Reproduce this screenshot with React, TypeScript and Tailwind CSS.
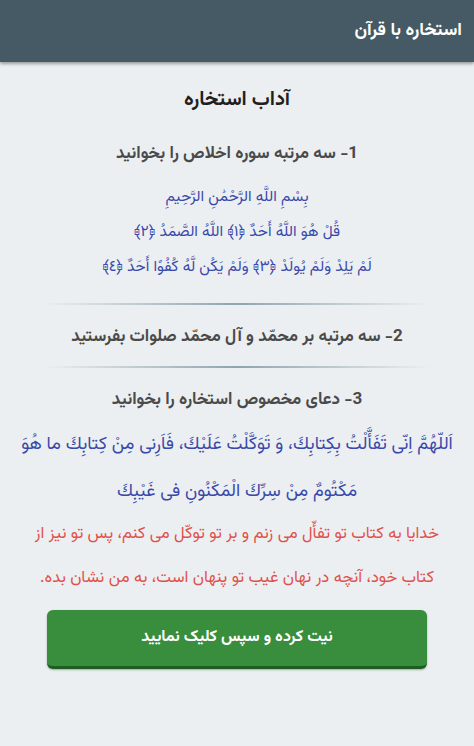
import React from 'react';

const font = { fontFamily: '"Vazirmatn", "Noto Sans Arabic", "DejaVu Sans", sans-serif' };

const Divider: React.FC = () => (
  <div className="mx-auto mt-[14px] mb-[17px] h-[2px] w-[388px] bg-gradient-to-r from-transparent via-[#90a4ae] to-transparent" />
);

const App: React.FC = () => {
  return (
    <div dir="rtl" className="min-h-[746px] w-[474px] bg-[#eceff1]" style={font}>
      <header className="flex h-[62px] items-center bg-[#455a64] px-3 shadow-[0_2px_3px_rgba(0,0,0,0.35)]">
        <h1 className="text-[18px] font-bold text-white">استخاره با قرآن</h1>
      </header>

      <main className="flex flex-col items-center px-3 pt-[23px] text-center">
        <h2 className="text-[20px] font-bold text-[#1f1f1f]">آداب استخاره</h2>

        <h3 className="mt-[27px] text-[17px] font-bold text-[#4a4a4a]">1- سه مرتبه سوره اخلاص را بخوانید</h3>

        <div className="mt-[15px] flex flex-col gap-[7px] text-[15.5px] leading-[28px] text-[#3949ab]">
          <p>بِسْمِ اللَّهِ الرَّحْمَٰنِ الرَّحِيمِ</p>
          <p>قُلْ هُوَ اللَّهُ أَحَدٌ ﴿١﴾ اللَّهُ الصَّمَدُ ﴿٢﴾</p>
          <p>لَمْ يَلِدْ وَلَمْ يُولَدْ ﴿٣﴾ وَلَمْ يَكُن لَّهُ كُفُوًا أَحَدٌ ﴿٤﴾</p>
        </div>

        <div className="mt-[8px] w-full">
          <Divider />
        </div>

        <h3 className="text-[17px] font-bold leading-[30px] text-[#4a4a4a]">2- سه مرتبه بر محمّد و آل محمّد صلوات بفرستید</h3>

        <div className="w-full">
          <Divider />
        </div>

        <h3 className="text-[17px] font-bold leading-[30px] text-[#4a4a4a]">3- دعای مخصوص استخاره را بخوانید</h3>

        <p className="mt-[7px] text-[18px] leading-[47px] text-[#3949ab]">
          اَللّهُمَّ اِنّی تَفَأَّلْتُ بِكِتابِكَ، وَ تَوَكَّلْتُ عَلَيْكَ، فَاَرِنی مِنْ كِتابِكَ ما هُوَ مَكْتُومٌ مِنْ سِرِّكَ الْمَكْنُونِ فی غَيْبِكَ
        </p>

        <p className="-mt-[4px] px-2 text-[16.5px] leading-[44px] text-[#e0514b]">
          خدایا به کتاب تو تفأّل می زنم و بر تو توکّل می کنم، پس تو نیز از کتاب خود، آنچه در نهان غیب تو پنهان است، به من نشان بده.
        </p>

        <button className="mt-[10px] h-[59px] w-[380px] rounded-md border-b-[3px] border-[#1b5e20] bg-[#388e3c] text-[16px] font-bold text-white shadow-[0_1px_2px_rgba(0,0,0,0.3)]">
          نیت کرده و سپس کلیک نمایید
        </button>
      </main>
    </div>
  );
};

export default App;
